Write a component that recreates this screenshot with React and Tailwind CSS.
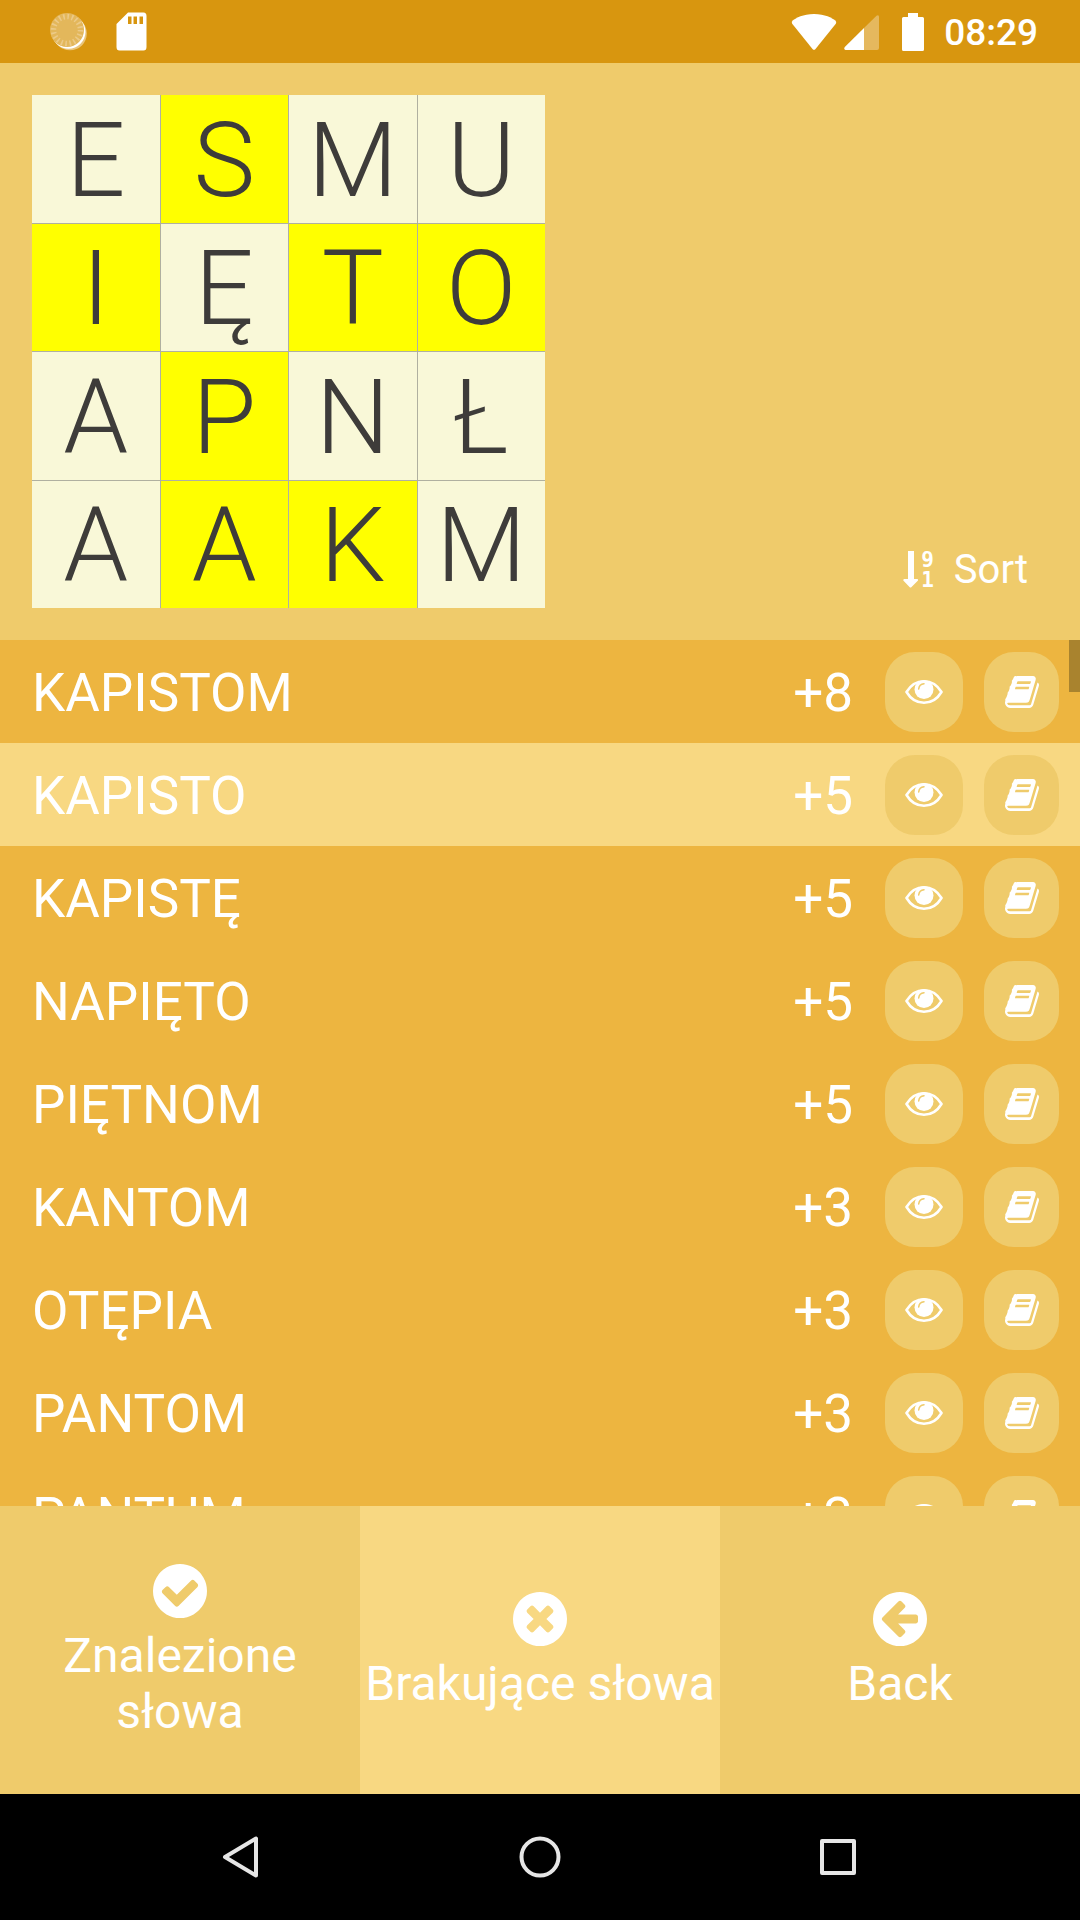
import React, { useState } from "react";

const LETTERS = ["E", "S", "M", "U", "I", "Ę", "T", "O", "A", "P", "N", "Ł", "A", "A", "K", "M"];
const HIGHLIGHTED = [1, 4, 6, 7, 9, 13, 14];

const WORDS = [
  ["KAPISTOM", 8],
  ["KAPISTO", 5],
  ["KAPISTĘ", 5],
  ["NAPIĘTO", 5],
  ["PIĘTNOM", 5],
  ["KANTOM", 3],
  ["OTĘPIA", 3],
  ["PANTOM", 3],
  ["PANTUM", 3],
];

function SpinnerIcon() {
  return (
    <svg width="38" height="40" viewBox="0 0 38 40" aria-hidden="true">
      <circle cx="20" cy="21.500" r="16.800" fill="#fff" fillOpacity="0.45" />
      <circle cx="18.500" cy="19.800" r="17" fill="#fff" />
      <circle cx="17" cy="18" r="17" fill="#e3b75b" />
      <circle cx="17" cy="18" r="13.500" fill="none" stroke="#ecca88" strokeWidth="5.500" strokeDasharray="1.600 2.641" />
    </svg>
  );
}

function SdCardIcon() {
  return (
    <svg width="31" height="39" viewBox="0 0 31 39" aria-hidden="true">
      <path
        fill="#fff"
        fillRule="evenodd"
        d="M12 0.500H27.500Q30.500 0.500 30.500 4V35Q30.500 38.500 27.500 38.500H3.500Q0.500 38.500 0.500 35V12ZM12 4.500V12H15.500V4.500ZM17.500 4.500V12H21V4.500ZM23.500 4.500V12H27V4.500Z"
      />
    </svg>
  );
}

function WifiIcon() {
  return (
    <svg width="46" height="38" viewBox="0 0 46 38" aria-hidden="true">
      <path fill="#fff" d="M23 1C34 1 41 5 44.300 7.500Q46 9 44.800 10.800L24.500 36Q23 37.700 21.500 36L1.200 10.800Q0 9 1.700 7.500C5 5 12 1 23 1Z" />
    </svg>
  );
}

function SignalIcon() {
  return (
    <svg width="36" height="38" viewBox="0 0 36 38" aria-hidden="true">
      <path fill="#fff" fillOpacity="0.33" d="M20 15L32.500 2.800Q35 1.500 35 4V35Q35 37 33 37H20Z" />
      <path fill="#fff" d="M20 15V37H1.500Q-0.500 36 0.800 34Z" />
    </svg>
  );
}

function BatteryIcon() {
  return (
    <svg width="22" height="38" viewBox="0 0 22 38" aria-hidden="true">
      <path fill="#fff" d="M6 0H16V4H20.500Q22 4 22 5.500V36.500Q22 38 20.500 38H1.500Q0 38 0 36.500V5.500Q0 4 1.500 4H6Z" />
    </svg>
  );
}

function SortIcon() {
  return (
    <span className="flex items-center gap-[2px]" aria-hidden="true">
      <svg width="16" height="38" viewBox="0 0 16 38">
        <path fill="#fff" d="M5 0H11V28H14.500Q15.500 28.500 15 29.500L8.500 36Q7.500 37 6.500 36L0.300 29.500Q0 28.500 1 28H5Z" />
      </svg>
      <span className="flex flex-col font-['DejaVu_Sans_Mono',monospace] text-[21px] leading-5 font-bold">
        <span>9</span>
        <span>1</span>
      </span>
    </span>
  );
}

function EyeIcon() {
  return (
    <svg width="38" height="26" viewBox="0 0 38 26" aria-hidden="true">
      <path
        d="M1.500 13C6 5.500 12 2.200 19 2.200S32 5.500 36.500 13C32 20.500 26 23.800 19 23.800S6 20.500 1.500 13Z"
        fill="none"
        stroke="#fff"
        strokeWidth="2.600"
        strokeLinejoin="round"
      />
      <circle cx="19" cy="10.500" r="9.500" fill="#fff" />
      <path d="M13.700 10C14 7 16 5 19 4.800" fill="none" stroke="#efcb6b" strokeWidth="1.500" strokeLinecap="round" />
    </svg>
  );
}

function BookIcon() {
  return (
    <svg width="34" height="32" viewBox="0 128 1664 1536" preserveAspectRatio="none" aria-hidden="true">
      <path
        fill="#fff"
        d="M1639 478q40 57 18 129l-275 906q-19 64-76.500 107.500t-122.500 43.500h-923q-77 0-148.500-53.500t-99.500-131.500q-24-67-2-127 0-4 3-27t4-37q1-8-3-21.500t-3-19.500q2-11 8-21t16.500-23.500 16.500-23.500q23-38 45-91.500t30-91.500q3-10 .5-30t-.5-28q3-11 17-28t17-23q21-36 42-92t25-90q1-9-2.500-32t.5-28q4-13 22-30.500t22-22.500q19-26 42.500-84.500t27.500-96.500q1-8-3-25.500t-2-26.500q2-8 9-18t18-23 17-21q8-12 16.500-30.500t15-35 16-36 19.500-32 26.500-23.500 36-11.500 47.500 5.500l-1 3q38-9 51-9h761q74 0 114 56t18 130l-274 906q-36 119-71.500 153.500t-128.500 34.500h-869q-27 0-38 15-11 16-1 43 24 70 144 70h923q29 0 56-15.500t35-41.500l300-987q7-22 5-57 38 15 59 43zm-1064 2q-4 13 2 22.500t20 9.500h608q13 0 25.500-9.500t16.500-22.500l21-64q4-13-2-22.500t-20-9.500h-608q-13 0-25.500 9.500t-16.500 22.500zm-83 256q-4 13 2 22.500t20 9.500h608q13 0 25.500-9.500t16.500-22.500l21-64q4-13-2-22.500t-20-9.500h-608q-13 0-25.500 9.500t-16.500 22.500z"
      />
    </svg>
  );
}

const DISC =
  "M1536 768q0 209-103 385.500t-279.500 279.500-385.500 103-385.500-103-279.500-279.500-103-385.500 103-385.500 279.500-279.500 385.500-103 385.500 103 279.500 279.500 103 385.500z";
const CHECK =
  "M1284 606q0-28-18-46l-91-90q-19-19-45-19t-45 19l-408 407-226-226q-19-19-45-19t-45 19l-91 90q-18 18-18 46 0 27 18 45l362 362q19 19 45 19 27 0 46-19l543-543q18-18 18-45z";
const CROSS =
  "M1149 994q0-26-19-45l-181-181 181-181q19-19 19-45 0-27-19-46l-90-90q-19-19-46-19-26 0-45 19l-181 181-181-181q-19-19-45-19-27 0-46 19l-90 90q-19 19-19 46 0 26 19 45l181 181-181 181q-19 19-19 45 0 27 19 46l90 90q19 19 46 19 26 0 45-19l181-181 181 181q19 19 45 19 27 0 46-19l90-90q19-19 19-46z";
const ARROW =
  "M1280 832v-128q0-26-19-45t-45-19h-502l189-189q19-19 19-45t-19-45l-91-91q-18-18-45-18t-45 18l-362 362-91 91q-18 18-18 45t18 45l91 91 362 362q18 18 45 18t45-18l91-91q18-18 18-45t-18-45l-189-189h502q26 0 45-19t19-45z";

const TABS = [
  ["Znalezione słowa", CHECK],
  ["Brakujące słowa", CROSS],
  ["Back", ARROW],
];

function DiscIcon({ mark }) {
  return (
    <svg className="shrink-0" width="54" height="54" viewBox="0 0 1536 1536" aria-hidden="true">
      <path fill="#fff" fillRule="evenodd" d={DISC + mark} />
    </svg>
  );
}

function StatusBar() {
  return (
    <div className="flex h-[63px] shrink-0 items-center justify-between bg-[#d8960f] pr-[42px] pl-[50px]">
      <div className="flex items-center gap-7">
        <SpinnerIcon />
        <SdCardIcon />
      </div>
      <div className="flex items-center">
        <WifiIcon />
        <span className="ml-[7px]"><SignalIcon /></span>
        <span className="ml-[22px]"><BatteryIcon /></span>
        <span className="ml-5 pt-[2px] text-[37px] leading-10 font-medium">08:29</span>
      </div>
    </div>
  );
}

function WordRow({ word, points, selected, onSelect }) {
  return (
    <li className={"flex h-[103px] items-center pt-px pr-[21px] pl-8 " + (selected ? "bg-[#f8d882]" : "")}>
      <span className="flex-1 pt-[2px] text-[53px] leading-16">{word}</span>
      <span className="mr-8 pt-[2px] text-[53px] leading-16">+{points}</span>
      <button
        type="button"
        aria-label={"Show " + word}
        onClick={onSelect}
        className="mr-[21px] flex h-20 w-[78px] items-center justify-center rounded-[30px] bg-[#efcb6b]"
      >
        <EyeIcon />
      </button>
      <button
        type="button"
        aria-label={"Define " + word}
        className="flex h-20 w-[75px] items-center justify-center rounded-[30px] bg-[#efcb6b]"
      >
        <BookIcon />
      </button>
    </li>
  );
}

export default function App() {
  const [selected, setSelected] = useState(1);
  const [tab, setTab] = useState(1);

  return (
    <div className="flex h-screen flex-col overflow-hidden bg-[#efcb6b] font-[Roboto,sans-serif] text-white">
      <StatusBar />

      <header className="flex shrink-0 items-end justify-between p-8">
        <div className="grid aspect-square w-[513px] grid-cols-4 grid-rows-4 gap-px bg-[#b0b0a0]">
          {LETTERS.map((letter, i) => (
            <div
              key={i}
              className={
                "flex items-center justify-center pt-1 text-[104px] leading-none font-light text-[#3e3c3a] " +
                (HIGHLIGHTED.includes(i) ? "bg-[#ffff00]" : "bg-[#f9f8d8]")
              }
            >
              {letter}
            </div>
          ))}
        </div>
        <button type="button" className="flex items-center gap-5 px-5 py-[18px] text-[40px] leading-10">
          <SortIcon />
          Sort
        </button>
      </header>

      <main className="relative min-h-0 flex-1 bg-[#edb540]">
        <ul className="h-full overflow-y-auto [scrollbar-width:none]">
          {WORDS.map(([word, points], i) => (
            <WordRow key={word} word={word} points={points} selected={i === selected} onSelect={() => setSelected(i)} />
          ))}
        </ul>
        <div className="absolute top-0 right-0 h-[52px] w-[11px] bg-[#a9832e]" />
      </main>

      <nav className="grid h-72 shrink-0 grid-cols-3">
        {TABS.map(([label, mark], i) => (
          <button
            key={label}
            type="button"
            aria-pressed={i === tab}
            onClick={() => setTab(i)}
            className={"flex flex-col items-center justify-center gap-[10px] pt-1 " + (i === tab ? "bg-[#f8d882]" : "")}
          >
            <DiscIcon mark={mark} />
            <span className="text-[48px] leading-14">{label}</span>
          </button>
        ))}
      </nav>

      <footer className="grid h-[126px] shrink-0 grid-cols-3 bg-black px-[92px]">
        <button type="button" aria-label="Back" className="flex items-center justify-center">
          <svg width="44" height="44" viewBox="0 0 44 44" fill="none" stroke="#e6e6e6" strokeWidth="4" strokeLinejoin="round">
            <path d="M6 22L37 3.500V40.500Z" />
          </svg>
        </button>
        <button type="button" aria-label="Home" className="flex items-center justify-center">
          <svg width="44" height="44" viewBox="0 0 44 44" fill="none" stroke="#e6e6e6" strokeWidth="4">
            <circle cx="22" cy="22" r="18.500" />
          </svg>
        </button>
        <button type="button" aria-label="Recent apps" className="flex items-center justify-center">
          <svg width="44" height="44" viewBox="0 0 44 44" fill="none" stroke="#e6e6e6" strokeWidth="4" strokeLinejoin="round">
            <rect x="5" y="6" width="32" height="32" />
          </svg>
        </button>
      </footer>
    </div>
  );
}
